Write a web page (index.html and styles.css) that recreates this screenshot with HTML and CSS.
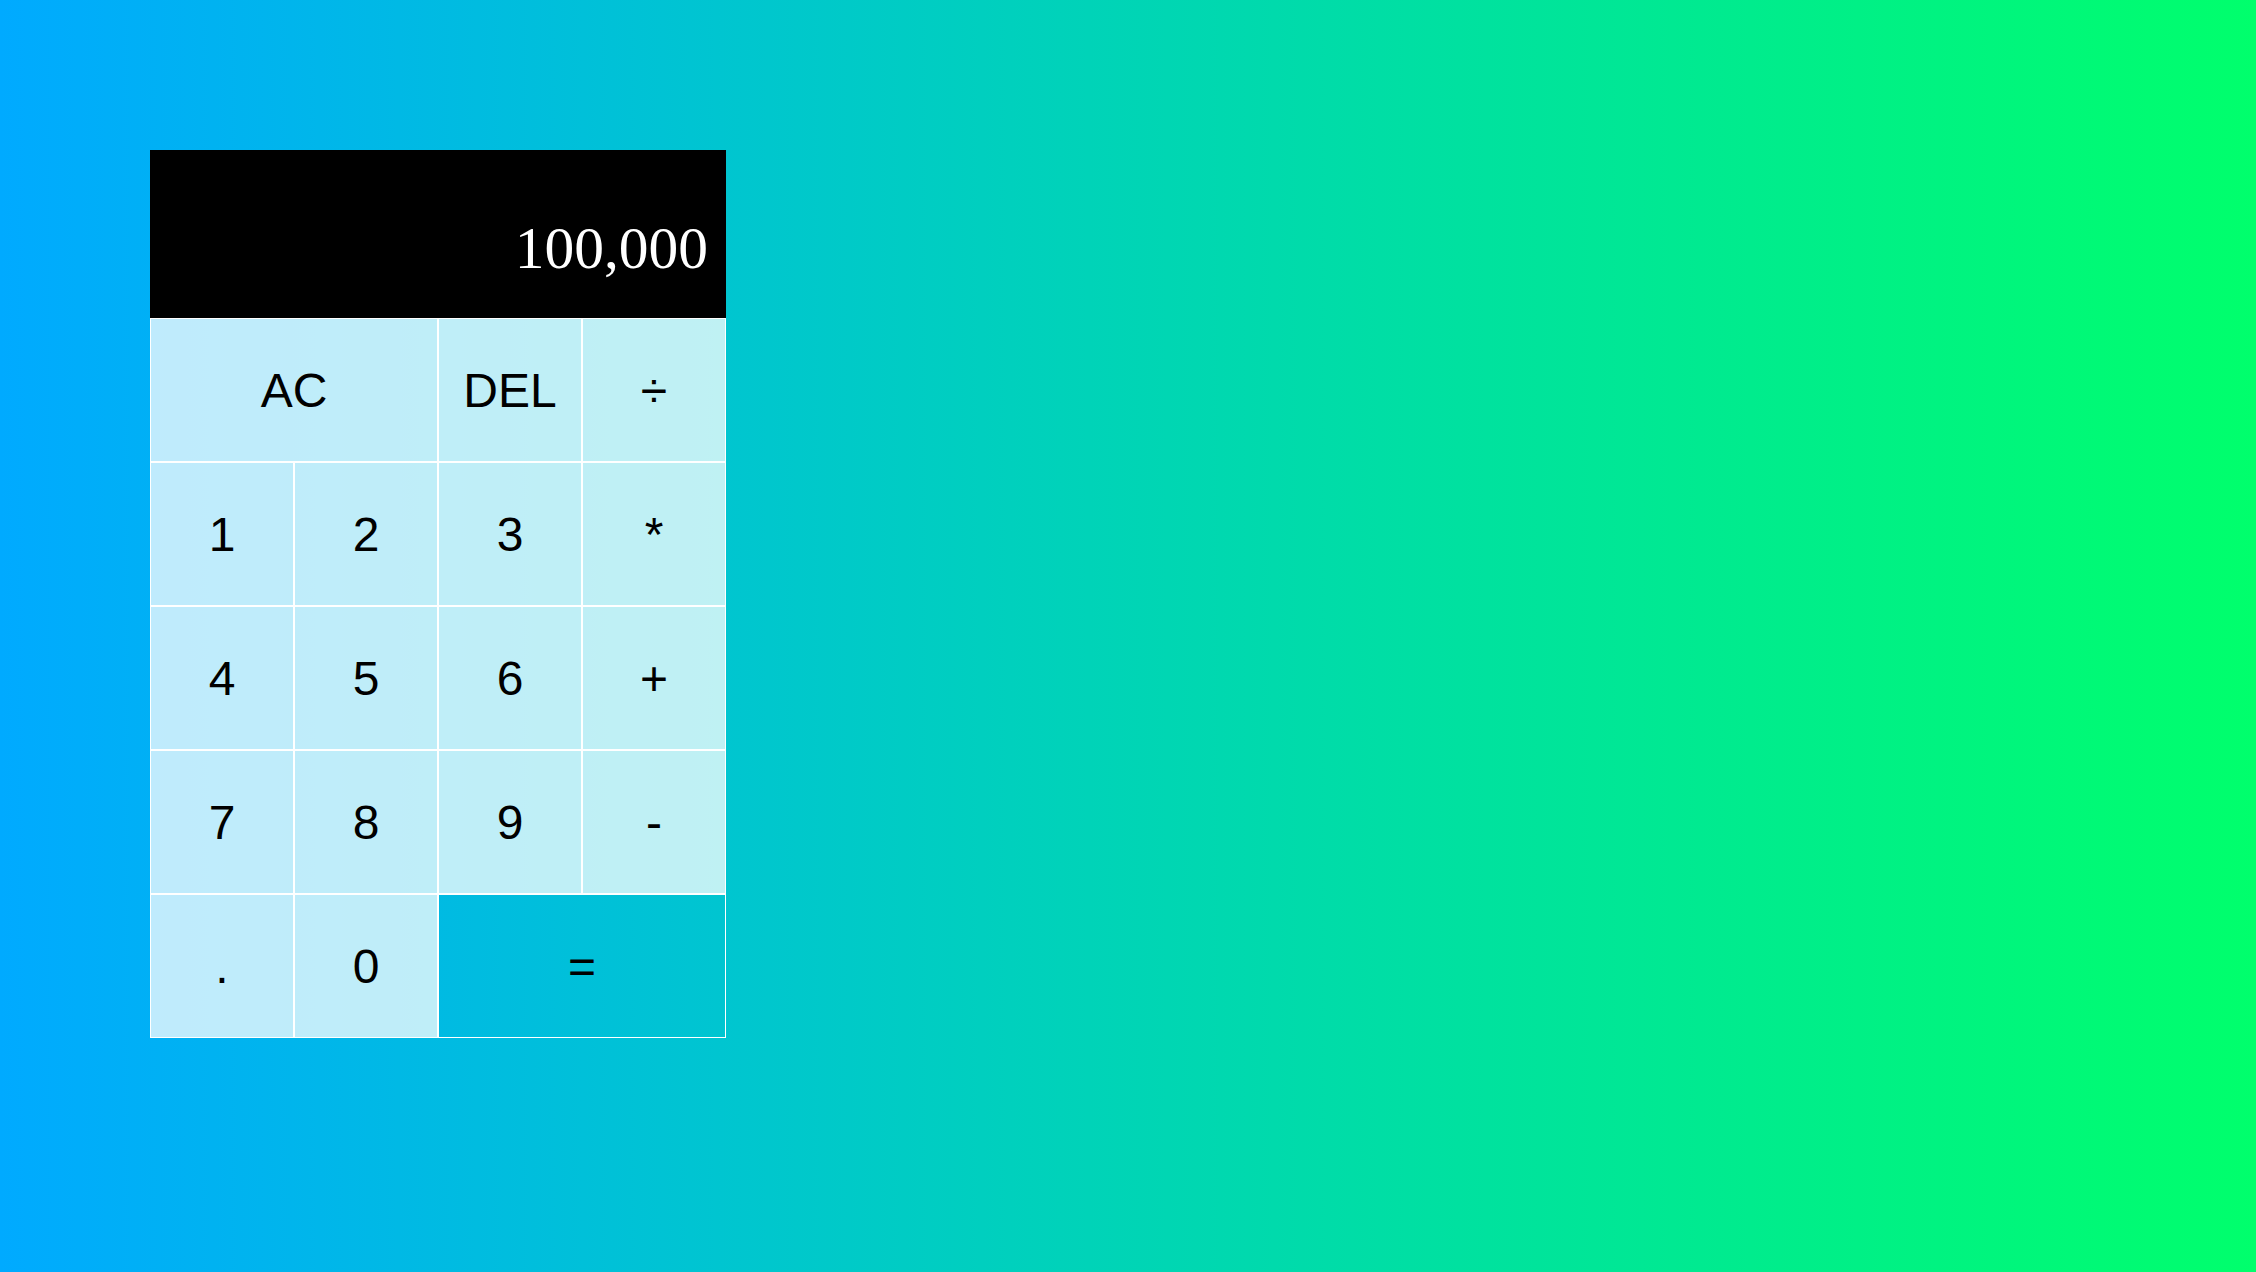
FILE: index.html
```html
<!DOCTYPE html>
<html lang="en">
<head>
<meta charset="utf-8">
<title>Calculator</title>
<link rel="stylesheet" href="styles.css">
</head>
<body>
<div class="calculator-grid">
  <div class="output">
    <div class="previous-operand"></div>
    <div class="current-operand">100,000</div>
  </div>
  <button class="span-two">AC</button>
  <button>DEL</button>
  <button>÷</button>
  <button>1</button>
  <button>2</button>
  <button>3</button>
  <button>*</button>
  <button>4</button>
  <button>5</button>
  <button>6</button>
  <button>+</button>
  <button>7</button>
  <button>8</button>
  <button>9</button>
  <button>-</button>
  <button>.</button>
  <button>0</button>
  <button class="span-two equals">=</button>
</div>
</body>
</html>
```

FILE: styles.css
```css
*, *::before, *::after {
  box-sizing: border-box;
}

html, body {
  margin: 0;
  padding: 0;
}

body {
  width: 2256px;
  height: 1272px;
  background: linear-gradient(to right, #00aaff, #00ff6c);
  padding: 150px 0 0 150px;
  overflow: hidden;
}

.calculator-grid {
  display: grid;
  grid-template-columns: repeat(4, 144px);
  grid-template-rows: 168px repeat(5, 144px);
  width: 576px;
}

.calculator-grid > button {
  font-family: "Liberation Sans", Arial, sans-serif;
  font-size: 48px;
  color: #000;
  border: 1px solid #fff;
  outline: none;
  background-color: rgba(255, 255, 255, 0.75);
  padding: 0;
  margin: 0;
  cursor: pointer;
}

.calculator-grid > button.equals {
  background-color: transparent;
}

.span-two {
  grid-column: span 2;
}

.output {
  grid-column: 1 / -1;
  background-color: #000;
  display: flex;
  flex-direction: column;
  align-items: flex-end;
  justify-content: flex-end;
  padding: 0 18px 40px 17px;
}

.previous-operand {
  color: rgba(255, 255, 255, 0.75);
  font-family: "Liberation Serif", "Times New Roman", serif;
  font-size: 35px;
}

.current-operand {
  color: #fff;
  font-family: "Liberation Serif", "Times New Roman", serif;
  font-size: 59.5px;
  line-height: 1;
}
```
